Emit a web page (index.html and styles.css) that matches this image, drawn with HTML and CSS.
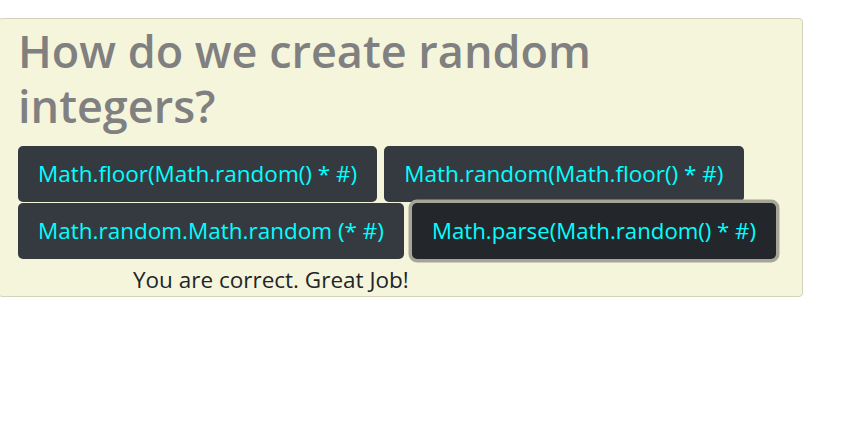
FILE: index.html
```html
<!DOCTYPE html>
<html>
<head>
<meta charset="utf-8">
<link rel="stylesheet" href="styles.css">
</head>
<body>
<div class="card">
  <h1 class="question">How do we create random integers?</h1>
  <div class="answers">
    <button class="answer">Math.floor(Math.random() * #)</button>
    <button class="answer">Math.random(Math.floor() * #)</button>
    <button class="answer">Math.random.Math.random (* #)</button>
    <button class="answer answer-active">Math.parse(Math.random() * #)</button>
  </div>
  <p class="feedback">You are correct. Great Job!</p>
</div>
</body>
</html>
```
FILE: styles.css
```css
html, body {
  margin: 0;
  padding: 0;
  background: #ffffff;
  font-family: "Open Sans", "Noto Sans", sans-serif;
}
.card {
  margin: 18px 0 0 -2px;
  width: 805px;
  box-sizing: border-box;
  background: #f5f5dc;
  border: 1px solid #d3d2bb;
  border-radius: 4px;
  padding: 4px 0 1px 19px;
}
.question {
  margin: 0 0 13px 0;
  font-size: 45px;
  line-height: 55px;
  font-weight: 600;
  color: #808080;
  width: 640px;
}
.answers {
  display: flex;
  flex-wrap: wrap;
  column-gap: 7px;
  row-gap: 1px;
  width: 770px;
}
.answer {
  font-family: inherit;
  font-size: 22.5px;
  line-height: 30px;
  padding: 13px 20px;
  border: 0;
  border-radius: 5px;
  background: #343a40;
  color: #00ffff;
  cursor: pointer;
}
.answer-active {
  margin-left: 1px;
  font-size: 22.2px;
  background: #23272b;
  box-shadow: 0 0 0 3.5px #a6a698;
}
.feedback {
  margin: 6px 0 0 115px;
  font-size: 22.5px;
  line-height: 30px;
  color: #212529;
}
```
